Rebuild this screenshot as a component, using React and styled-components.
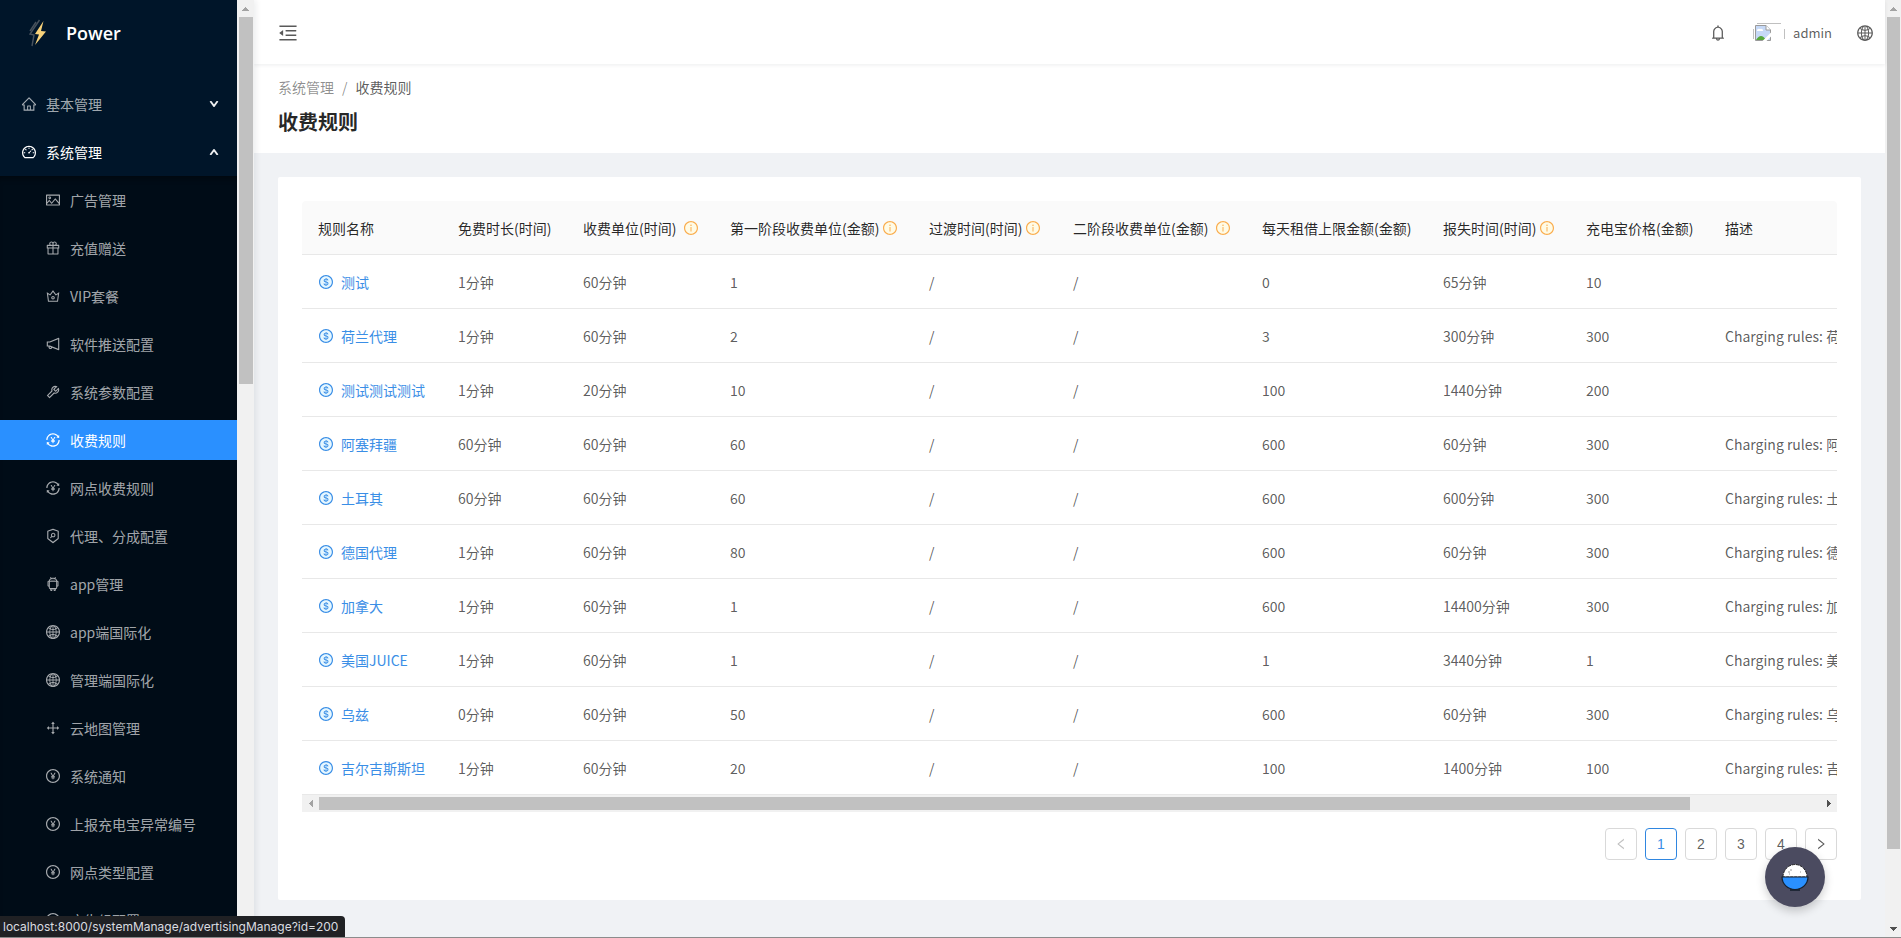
import React, { Component } from 'react';
import styled, { createGlobalStyle } from 'styled-components';
import {
  AiOutlineHome, AiOutlineDashboard, AiOutlinePicture, AiOutlineGift, AiOutlineCrown,
  AiOutlineNotification, AiOutlineTool, AiOutlineTransaction, AiOutlineSecurityScan,
  AiOutlineAndroid, AiOutlineGlobal, AiOutlineDrag, AiOutlinePayCircle, AiOutlineMenuFold,
  AiOutlineBell, AiOutlineInfoCircle, AiOutlineDollarCircle, AiOutlineLeft, AiOutlineRight,
  AiOutlineDown, AiOutlineUp
} from 'react-icons/ai';

const subMenu = [
  { name: '广告管理', icon: AiOutlinePicture },
  { name: '充值赠送', icon: AiOutlineGift },
  { name: 'VIP套餐', icon: AiOutlineCrown },
  { name: '软件推送配置', icon: AiOutlineNotification },
  { name: '系统参数配置', icon: AiOutlineTool },
  { name: '收费规则', icon: AiOutlineTransaction },
  { name: '网点收费规则', icon: AiOutlineTransaction },
  { name: '代理、分成配置', icon: AiOutlineSecurityScan },
  { name: 'app管理', icon: AiOutlineAndroid },
  { name: 'app端国际化', icon: AiOutlineGlobal },
  { name: '管理端国际化', icon: AiOutlineGlobal },
  { name: '云地图管理', icon: AiOutlineDrag },
  { name: '系统通知', icon: AiOutlinePayCircle },
  { name: '上报充电宝异常编号', icon: AiOutlinePayCircle },
  { name: '网点类型配置', icon: AiOutlinePayCircle },
  { name: '广告组配置', icon: AiOutlinePayCircle }
]

const columns = [
  { title: '规则名称', width: 140 },
  { title: '免费时长(时间)', width: 125 },
  { title: '收费单位(时间)', width: 147, info: true, spaced: true },
  { title: '第一阶段收费单位(金额)', width: 199, info: true },
  { title: '过渡时间(时间)', width: 144, info: true },
  { title: '二阶段收费单位(金额)', width: 189, info: true, spaced: true },
  { title: '每天租借上限金额(金额)', width: 181 },
  { title: '报失时间(时间)', width: 143, info: true },
  { title: '充电宝价格(金额)', width: 139 },
  { title: '描述', width: 310 }
]

const rules = [
  ['测试', '1分钟', '60分钟', '1', '/', '/', '0', '65分钟', '10', ''],
  ['荷兰代理', '1分钟', '60分钟', '2', '/', '/', '3', '300分钟', '300', 'Charging rules: 荷兰代理'],
  ['测试测试测试', '1分钟', '20分钟', '10', '/', '/', '100', '1440分钟', '200', ''],
  ['阿塞拜疆', '60分钟', '60分钟', '60', '/', '/', '600', '60分钟', '300', 'Charging rules: 阿塞拜疆'],
  ['土耳其', '60分钟', '60分钟', '60', '/', '/', '600', '600分钟', '300', 'Charging rules: 土耳其'],
  ['德国代理', '1分钟', '60分钟', '80', '/', '/', '600', '60分钟', '300', 'Charging rules: 德国代理'],
  ['加拿大', '1分钟', '60分钟', '1', '/', '/', '600', '14400分钟', '300', 'Charging rules: 加拿大'],
  ['美国JUICE', '1分钟', '60分钟', '1', '/', '/', '1', '3440分钟', '1', 'Charging rules: 美国JUICE'],
  ['乌兹', '0分钟', '60分钟', '50', '/', '/', '600', '60分钟', '300', 'Charging rules: 乌兹'],
  ['吉尔吉斯斯坦', '1分钟', '60分钟', '20', '/', '/', '100', '1400分钟', '100', 'Charging rules: 吉尔吉斯斯坦']
]

const GlobalStyle = createGlobalStyle`
  * {
    box-sizing: border-box;
  }
  body {
    margin: 0;
    overflow: hidden;
    font-family: "Noto Sans CJK SC", sans-serif;
    font-size: 14px;
    line-height: 22px;
    color: rgba(0, 0, 0, 0.65);
    background: #f0f2f5;
  }
  a {
    color: inherit;
    text-decoration: none;
  }
  svg {
    display: block;
    flex: none;
  }
`
const Layout = styled.div`
  display: flex;
  height: 100vh;
  border-bottom: 1px solid #8c8c8c;
`
const Sider = styled.aside`
  position: relative;
  z-index: 2;
  flex: none;
  display: flex;
  width: 254px;
  box-shadow: 2px 0 6px rgba(0, 21, 41, 0.08);
`
const SiderBody = styled.div`
  flex: 1;
  overflow: hidden;
  background: #001529;
`
const Logo = styled.a`
  display: flex;
  align-items: center;
  gap: 20px;
  height: 64px;
  padding: 2px 26px 0;
  font-family: "Open Sans", sans-serif;
  font-size: 18px;
  font-weight: 600;
  color: #fff;
`
const Menu = styled.ul`
  margin: 0;
  padding: 16px 0 0;
  list-style: none;

  li {
    display: flow-root;
  }
`
const MenuGroup = styled.button`
  display: flex;
  align-items: center;
  gap: 9px;
  width: 100%;
  height: 40px;
  margin: 4px 0;
  padding: 0 18px 0 21px;
  border: none;
  background: none;
  font: inherit;
  color: ${props => props.$open ? '#fff' : 'rgba(255, 255, 255, 0.65)'};
  cursor: pointer;

  span {
    flex: 1;
    text-align: left;
  }
  svg:last-child {
    stroke: currentColor;
    stroke-width: 110;
    color: rgba(255, 255, 255, 0.85);
  }
`
const SubMenu = styled.ul`
  margin: 0;
  padding: 4px 0;
  list-style: none;
  background: #000c17;
  box-shadow: inset 0 6px 6px -4px rgba(0, 0, 0, 0.45);
`
const MenuItem = styled.a`
  display: flex;
  align-items: center;
  gap: 9px;
  height: 40px;
  margin-bottom: 8px;
  padding-left: 45px;
  white-space: nowrap;
  color: ${props => props.$active ? '#fff' : 'rgba(255, 255, 255, 0.65)'};
  background: ${props => props.$active ? '#2a90ff' : 'transparent'};
`
const Main = styled.div`
  flex: 1;
  min-width: 0;
  display: flex;
  flex-direction: column;
`
const Header = styled.header`
  flex: none;
  display: flex;
  align-items: center;
  height: 64px;
  padding: 2px 11px 0 23px;
  background: #fff;
  box-shadow: 0 1px 4px rgba(0, 21, 41, 0.08);
  z-index: 1;
`
const IconButton = styled.button`
  display: flex;
  padding: 0;
  border: none;
  background: none;
  color: inherit;
  cursor: pointer;
`
const HeaderRight = styled.div`
  display: flex;
  align-items: center;
  margin-left: auto;
  gap: 24px;
`
const Account = styled.a`
  display: flex;
  align-items: center;
  gap: 8px;
  margin-left: 2px;
  font-size: 13px;
`
const PageHeader = styled.div`
  flex: none;
  padding: 12px 24px 16px;
  background: #fff;
`
const Breadcrumb = styled.nav`
  display: flex;
  gap: 8px;
  color: rgba(0, 0, 0, 0.45);

  span:last-child {
    color: rgba(0, 0, 0, 0.65);
  }
`
const Title = styled.h1`
  margin: 9px 0 0;
  font-size: 20px;
  line-height: 30px;
  font-weight: 700;
  color: rgba(0, 0, 0, 0.85);
`
const Card = styled.section`
  margin: 24px;
  padding: 24px 24px 40px;
  border-radius: 2px;
  background: #fff;
`
const TableWrap = styled.div`
  overflow: hidden;
  border-radius: 4px 4px 0 0;
`
const Table = styled.table`
  table-layout: fixed;
  width: 1717px;
  border-collapse: separate;
  border-spacing: 0;
`
const Th = styled.th`
  height: 54px;
  padding: 0 16px;
  border-bottom: 1px solid #e8e8e8;
  background: #fafafa;
  text-align: left;
  font-weight: 400;
  white-space: nowrap;
  color: rgba(0, 0, 0, 0.85);
`
const ThLabel = styled.div`
  display: flex;
  align-items: center;
  gap: ${props => props.$spaced ? '7px' : '3px'};

  svg {
    color: #faad4e;
    background: radial-gradient(circle, #fffbe6 55%, transparent 60%);
  }
`
const Td = styled.td`
  height: 54px;
  padding: 0 16px;
  border-bottom: 1px solid #e8e8e8;
  white-space: nowrap;
`
const RuleLink = styled.a`
  display: flex;
  align-items: center;
  gap: 7px;
  color: #3a8ee6;

  svg {
    background: radial-gradient(circle, #e6f7ff 55%, transparent 60%);
  }
`
const Pagination = styled.nav`
  display: flex;
  justify-content: flex-end;
  gap: 8px;
  margin-top: 16px;
`
const PageButton = styled.button`
  display: flex;
  align-items: center;
  justify-content: center;
  width: 32px;
  height: 32px;
  padding: 0;
  border: 1px solid ${props => props.$active ? '#2f86e0' : '#d9d9d9'};
  border-radius: 4px;
  background: #fff;
  font-family: "Liberation Sans", sans-serif;
  font-size: 14px;
  color: ${props => props.$active ? '#3a8ee6' : 'rgba(0, 0, 0, 0.65)'};

  &:disabled {
    color: rgba(0, 0, 0, 0.25);
  }
`
const Track = styled.div`
  flex: none;
  display: flex;
  flex-direction: ${props => props.$horizontal ? 'row' : 'column'};
  justify-content: space-between;
  align-items: center;
  ${props => props.$horizontal ? 'height' : 'width'}: ${props => props.$thickness};
  background: #f1f1f1;
`
const Rail = styled.div`
  flex: 1;
  align-self: stretch;
  padding: ${props => props.$horizontal ? '2px 0' : '0 1px 0 2px'};
`
const Thumb = styled.div`
  width: ${props => props.$horizontal ? props.$size : '100%'};
  height: ${props => props.$horizontal ? '100%' : props.$size};
  background: #c1c1c1;
`
const ArrowBox = styled.div`
  display: flex;
  align-items: center;
  justify-content: center;
  width: 17px;
  height: 17px;
  color: ${props => props.$dim ? '#a3a3a3' : '#505050'};
`
const Fab = styled.button`
  position: fixed;
  z-index: 3;
  right: 76px;
  bottom: 31px;
  display: flex;
  align-items: center;
  justify-content: center;
  width: 60px;
  height: 60px;
  padding: 0;
  border: none;
  border-radius: 50%;
  background: #4b4b60;
  box-shadow: 0 4px 10px rgba(0, 0, 0, 0.2);
`
const StatusBar = styled.div`
  position: fixed;
  z-index: 3;
  left: 0;
  bottom: 1px;
  height: 21px;
  padding: 0 7px 0 3px;
  border-top-right-radius: 4px;
  background: #202124;
  font-family: Inter, sans-serif;
  font-size: 12px;
  line-height: 21px;
  color: #dadce0;
`

const arrows = {
  up: 'M0 4 L3.5 0 L7 4 Z',
  down: 'M0 0 L7 0 L3.5 4 Z',
  left: 'M4 0 L4 7 L0 3.5 Z',
  right: 'M0 0 L4 3.5 L0 7 Z'
}

const Arrow = ({ dir, dim }) => (
  <ArrowBox $dim={dim}>
    <svg
      width={dir === 'up' || dir === 'down' ? 7 : 4}
      height={dir === 'up' || dir === 'down' ? 4 : 7}
      shapeRendering='crispEdges'
    >
      <path d={arrows[dir]} fill='currentColor' />
    </svg>
  </ArrowBox>
)

const ScrollBar = ({ horizontal, size, thickness = '17px' }) => (
  <Track $horizontal={horizontal} $thickness={thickness}>
    <Arrow dir={horizontal ? 'left' : 'up'} dim />
    <Rail $horizontal={horizontal}>
      <Thumb $horizontal={horizontal} $size={size} />
    </Rail>
    <Arrow dir={horizontal ? 'right' : 'down'} />
  </Track>
)

const Bolt = () => (
  <svg width='20' height='28' viewBox='0 0 20 28'>
    <path d='M13.500 1 L4 15 L8 16 L6 27 M10 3 L4 12' fill='none' stroke='#48525c' strokeWidth='1.400' />
    <path d='M17.500 2 L9 15 L13 15.500 L9 26 L20 12.500 L15 12 Z' fill='#f8d27a' />
  </svg>
)

const BrokenImage = () => (
  <svg width='32' height='24' viewBox='0 0 32 24'>
    <path d='M4 2.500 H28 M.5 8 V18 M31.500 8 V18' stroke='#c0c0c0' fill='none' />
    <path d='M2.500 4.500 H13 L17.500 9 V19.500 H2.500 Z' fill='#c6d9f7' stroke='#9a9a9a' />
    <path d='M4 10 a2 2 0 0 1 3 -2 a2 2 0 0 1 3 2 Z' fill='#fff' />
    <path d='M3 19 Q8 11 13 19 Z' fill='#56a83c' />
    <path d='M13 4.500 V9 H17.500' fill='#fff' stroke='#9a9a9a' />
    <path d='M9 20.500 L18.500 11 V15 L13 20.500 Z' fill='#fff' />
  </svg>
)

const RiceBowl = () => (
  <svg width='28' height='28' viewBox='0 0 28 28'>
    <path d='M2 14 A12 12.500 0 0 1 26 14 Z' fill='#fff' stroke='#222' strokeWidth='1' strokeDasharray='3 1' />
    <path d='M1 14 H27 A13 12.500 0 0 1 1 14 Z' fill='#2a90ff' stroke='#16202e' strokeWidth='1.200' />
    <path d='M9 27 H19' stroke='#16202e' strokeWidth='1.600' />
    <path d='M7 9 h2 M9 7 h2 M8 11 h1 M19 9 h1' stroke='#999' />
  </svg>
)

class App extends Component {
  constructor(props) {
    super(props)
    this.state = {
      current: '收费规则',
      page: 1
    }
  }

  selectMenu = (e, name) => {
    e.preventDefault()
    this.setState({ current: name })
  }

  changePage = (page) => {
    this.setState({ page })
  }

  render() {
    const { current, page } = this.state
    const menuItems = subMenu.map(({ name, icon: Icon }) => (
      <li key={name}>
        <MenuItem href='#' $active={name === current} onClick={e => this.selectMenu(e, name)}>
          <Icon size={16} />
          {name}
        </MenuItem>
      </li>
    ))
    const rows = rules.map(rule => (
      <tr key={rule[0]}>
        {rule.map((value, i) => (
          <Td key={columns[i].title}>
            {i === 0
              ? <RuleLink href='#'><AiOutlineDollarCircle size={16} />{value}</RuleLink>
              : value}
          </Td>
        ))}
      </tr>
    ))
    return (
      <Layout>
        <GlobalStyle />
        <Sider>
          <SiderBody>
            <Logo href='#'>
              <Bolt />
              Power
            </Logo>
            <Menu>
              <li>
                <MenuGroup>
                  <AiOutlineHome size={16} />
                  <span>基本管理</span>
                  <AiOutlineDown size={10} />
                </MenuGroup>
              </li>
              <li>
                <MenuGroup $open>
                  <AiOutlineDashboard size={16} />
                  <span>系统管理</span>
                  <AiOutlineUp size={10} />
                </MenuGroup>
                <SubMenu>{menuItems}</SubMenu>
              </li>
            </Menu>
          </SiderBody>
          <ScrollBar size='367px' />
        </Sider>
        <Main>
          <Header>
            <IconButton aria-label='menu'>
              <AiOutlineMenuFold size={22} />
            </IconButton>
            <HeaderRight>
              <IconButton aria-label='notice'><AiOutlineBell size={18} /></IconButton>
              <Account href='#'>
                <BrokenImage />
                admin
              </Account>
              <IconButton aria-label='language'><AiOutlineGlobal size={18} /></IconButton>
            </HeaderRight>
          </Header>
          <PageHeader>
            <Breadcrumb>
              <a href='#'>系统管理</a>
              <span>/</span>
              <span>收费规则</span>
            </Breadcrumb>
            <Title>收费规则</Title>
          </PageHeader>
          <Card>
            <TableWrap>
              <Table>
                <colgroup>
                  {columns.map(col => <col key={col.title} width={col.width} />)}
                </colgroup>
                <thead>
                  <tr>
                    {columns.map(col => (
                      <Th key={col.title}>
                        <ThLabel $spaced={col.spaced}>
                          {col.title}
                          {col.info && <AiOutlineInfoCircle size={16} />}
                        </ThLabel>
                      </Th>
                    ))}
                  </tr>
                </thead>
                <tbody>{rows}</tbody>
              </Table>
            </TableWrap>
            <ScrollBar horizontal size='calc(100% - 130px)' />
            <Pagination>
              <PageButton disabled aria-label='prev'><AiOutlineLeft size={14} /></PageButton>
              {[1, 2, 3, 4].map(n => (
                <PageButton key={n} $active={n === page} onClick={() => this.changePage(n)}>{n}</PageButton>
              ))}
              <PageButton aria-label='next'><AiOutlineRight size={14} /></PageButton>
            </Pagination>
          </Card>
        </Main>
        <ScrollBar size='calc(100% - 71px)' thickness='16px' />
        <Fab aria-label='tools'><RiceBowl /></Fab>
        <StatusBar>localhost:8000/systemManage/advertisingManage?id=200</StatusBar>
      </Layout>
    )
  }
}

export default App;
